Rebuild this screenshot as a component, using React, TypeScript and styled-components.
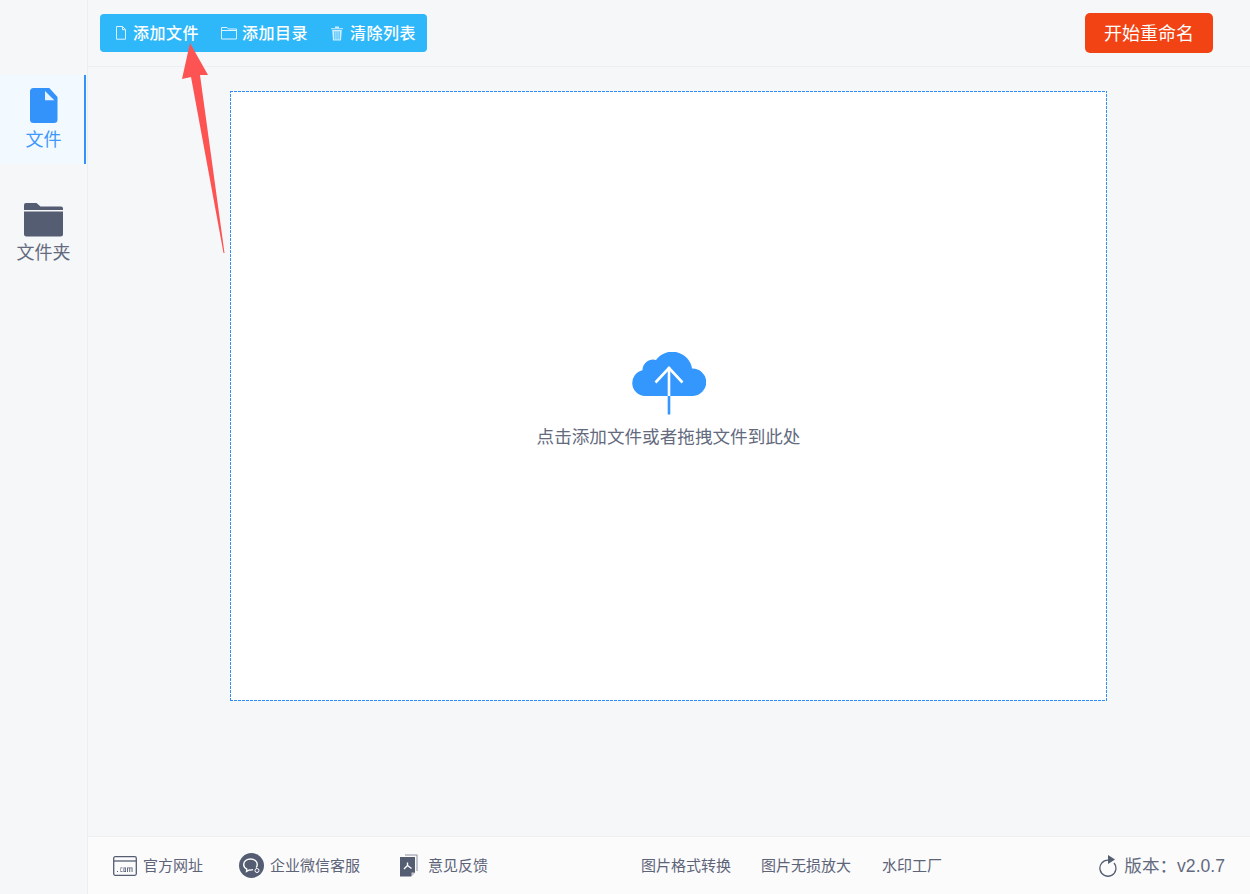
import styled, { createGlobalStyle } from "styled-components";

const GlobalStyle = createGlobalStyle`
  html, body {
    margin: 0;
    padding: 0;
    background: #f6f7f9;
  }
  * {
    box-sizing: border-box;
  }
`;

const FONT = `"Liberation Sans", "Noto Sans CJK SC", sans-serif`;
const DASH = "#2e8ffb";

const Shell = styled.div`
  position: relative;
  display: flex;
  width: 1250px;
  height: 894px;
  overflow: hidden;
  background: #f6f7f9;
  font-family: ${FONT};
`;

const Sidebar = styled.aside`
  flex: 0 0 88px;
  padding-top: 75px;
  border-right: 1px solid #eceef1;
`;

const NavItem = styled.div<{ $active?: boolean }>`
  display: flex;
  flex-direction: column;
  align-items: center;
  width: 86px;
  height: ${(p) => (p.$active ? "89px" : "113px")};
  padding-top: ${(p) => (p.$active ? "13px" : "39px")};
  padding-left: 3px;
  color: ${(p) => (p.$active ? "#3f98fb" : "#636a7e")};
  background: ${(p) => (p.$active ? "#f3faff" : "transparent")};
  border-right: 2px solid ${(p) => (p.$active ? "#3492fb" : "transparent")};
  font-size: 18px;
  line-height: 26px;

  svg {
    display: block;
  }
`;

const NavLabel = styled.span<{ $gap: number }>`
  margin-top: ${(p) => p.$gap}px;
`;

const Content = styled.div`
  flex: 1;
  display: flex;
  flex-direction: column;
  min-width: 0;
`;

const TopBar = styled.header`
  flex: 0 0 67px;
  display: flex;
  align-items: flex-start;
  justify-content: space-between;
  padding: 13px 37px 0 12px;
  border-bottom: 1px solid #eceef1;
`;

const Toolbar = styled.div`
  display: flex;
  align-items: center;
  height: 38px;
  margin-top: 1px;
  padding: 0 11px 2px 15px;
  background: #2fb8f9;
  border-radius: 4px;
  color: #fff;
  font-size: 16px;
  font-weight: 500;
`;

const ToolButton = styled.div<{ $gap: number; $iconGap: number }>`
  display: flex;
  align-items: center;
  margin-left: ${(p) => p.$gap}px;
  white-space: nowrap;
  letter-spacing: 0.5px;

  svg {
    display: block;
    margin-top: 2px;
    margin-right: ${(p) => p.$iconGap}px;
  }
`;

const StartButton = styled.div`
  display: flex;
  align-items: center;
  justify-content: center;
  width: 128px;
  height: 40px;
  padding-bottom: 2px;
  background: #f24314;
  border-radius: 5px;
  color: #fff;
  font-size: 18px;
`;

const Workspace = styled.main`
  flex: 1;
  display: flex;
  justify-content: center;
  align-items: flex-start;
  padding: 24px 1px 0 0;
`;

const DropZone = styled.div`
  display: flex;
  flex-direction: column;
  align-items: center;
  width: 877px;
  height: 610px;
  padding-top: 261px;
  background-color: #fff;
  background-image:
    repeating-linear-gradient(90deg, ${DASH} 0 3px, transparent 3px 4px),
    repeating-linear-gradient(90deg, ${DASH} 0 3px, transparent 3px 4px),
    repeating-linear-gradient(0deg, ${DASH} 0 3px, transparent 3px 4px),
    repeating-linear-gradient(0deg, ${DASH} 0 3px, transparent 3px 4px);
  background-size: 100% 1px, 100% 1px, 1px 100%, 1px 100%;
  background-position: 0 0, 0 100%, 0 0, 100% 0;
  background-repeat: no-repeat;
  color: #636a7e;
  font-size: 17.6px;
  line-height: 26px;
`;

const DropHint = styled.span`
  margin-top: 9px;
`;

const Footer = styled.footer`
  flex: 0 0 58px;
  display: flex;
  align-items: center;
  padding: 0 25px 2px;
  background: #fbfbfc;
  border-top: 1px solid #eff0f2;
  color: #5d6478;
  font-size: 15px;
`;

const FooterGroup = styled.div`
  flex: 0 0 528px;
  display: flex;
  align-items: center;
`;

const FooterLink = styled.div<{ $gap?: number; $iconGap: number }>`
  display: flex;
  align-items: center;
  margin-left: ${(p) => p.$gap ?? 0}px;
  white-space: nowrap;

  svg {
    display: block;
    margin-top: 2px;
    margin-right: ${(p) => p.$iconGap}px;
  }
`;

const ToolLinks = styled.div`
  display: flex;
  gap: 30px;
`;

const ToolLink = styled.span<{ $gap?: number }>`
  margin-left: ${(p) => p.$gap ?? 0}px;
`;

const Version = styled.div`
  display: flex;
  align-items: center;
  margin-left: auto;
  font-size: 17.6px;
  color: #636a7e;

  svg {
    display: block;
    margin-right: 7px;
  }
`;

const ArrowOverlay = styled.svg`
  position: absolute;
  left: 0;
  top: 0;
  pointer-events: none;
`;

const FileNavIcon = () => (
  <svg width="28" height="36" viewBox="0 0 28 36">
    <path
      d="M3.500 0H19.300L27.500 9V31.500a3.500 3.500 0 0 1-3.500 3.500H3.500A3.500 3.500 0 0 1 0 31.500V3.500A3.500 3.500 0 0 1 3.500 0Z"
      fill="#3492fb"
    />
    <path d="M15 3 24.300 12.300H15Z" fill="#e9f3ff" />
  </svg>
);

const FolderNavIcon = () => (
  <svg width="39" height="34" viewBox="0 0 39 34">
    <path
      d="M2 0H12.500L16.500 3.500H37a2 2 0 0 1 2 2V7H0V2a2 2 0 0 1 2-2Z"
      fill="#555d72"
    />
    <path
      d="M0 8.500H39V31a2.500 2.500 0 0 1-2.500 2.500H2.500A2.500 2.500 0 0 1 0 31Z"
      fill="#555d72"
    />
  </svg>
);

const ToolFileIcon = () => (
  <svg width="12" height="14" viewBox="0 0 12 14" fill="none" stroke="#dff3ff" strokeWidth="1">
    <path d="M1.500.5H7.500L10.500 3.700V13.200H1.500Z" />
    <path d="M7.500.5V3.700H10.500" />
  </svg>
);

const ToolFolderIcon = () => (
  <svg width="16" height="14" viewBox="0 0 16 14" fill="none" stroke="#dff3ff" strokeWidth="1">
    <path d="M.5 1.500H6L7.500 3H15.500V13H.5Z" />
    <path d="M.5 4.500H15.500" />
  </svg>
);

const ToolTrashIcon = () => (
  <svg width="12" height="15" viewBox="0 0 12 15" fill="#cfeeff">
    <path d="M0 2.200H12V3.300H0ZM4 .5H8V2H4Z" />
    <path
      d="M1.200 4H10.800L10 14.500H2ZM3.400 5.200V13.400H4.400V5.200ZM5.500 5.200V13.400H6.500V5.200ZM7.600 5.200V13.400H8.600V5.200Z"
      fillRule="evenodd"
    />
  </svg>
);

const CloudIcon = () => (
  <svg width="74" height="63" viewBox="0 0 74 63">
    <path
      d="M13 44A13 13 0 0 1 10.500 18.300 10.500 10.500 0 0 1 24 8 20 20 0 0 1 60 16.500 13.500 13.500 0 0 1 61 44Z"
      fill="#3397fd"
    />
    <path d="M37 15V44" stroke="#fff" strokeWidth="2.600" fill="none" />
    <path d="M37 44V62.500" stroke="#3397fd" strokeWidth="2.600" fill="none" />
    <path d="M23.500 30.500 37 16 50.500 30.500" stroke="#fff" strokeWidth="2.600" fill="none" />
  </svg>
);

const ComIcon = () => (
  <svg width="24" height="20" viewBox="0 0 24 20" fill="none">
    <rect x="0.700" y="0.700" width="22.600" height="18.600" rx="1.500" stroke="#555d72" strokeWidth="1.300" />
    <path d="M1 5H23" stroke="#555d72" strokeWidth="1.300" />
    <path
      d="M4 15h1v1H4ZM7.500 11.500h2v.8H8v2.900h1.500v.8h-2ZM10.500 11.500h2.500v4.500h-2.500ZM11.300 12.300v2.900h.9v-2.900ZM14 11.500h5.500v4.500h-.9v-3.700h-1.400v3.700h-.9v-3.700h-1.400v3.700H14Z"
      fill="#555d72"
    />
  </svg>
);

const ChatIcon = () => (
  <svg width="25" height="25" viewBox="0 0 25 25">
    <circle cx="12.500" cy="12.500" r="12.500" fill="#555d72" />
    <path
      d="M17.200 14.500C18 13.500 18.300 12.500 18.300 11.500 18.300 8.300 15.300 6 11.500 6S4.700 8.300 4.700 11.500C4.700 13.600 6 15.300 7.800 16.200L7.500 18.500 10.300 17C11.500 17.200 12.800 17.100 14 16.700"
      fill="none"
      stroke="#fff"
      strokeWidth="1.400"
    />
    <circle cx="18" cy="17.500" r="2" fill="none" stroke="#fff" strokeWidth="1" />
  </svg>
);

const FeedbackIcon = () => (
  <svg width="18" height="23" viewBox="0 0 18 23">
    <path d="M5 0.500H17.500V17H16.500V1.500H5Z" fill="#8a90a0" />
    <path d="M0 3H15V18.500L11 22.500H0Z" fill="#555d72" />
    <path d="M11.500 22 15 18.500H11.500Z" fill="#c9ccd4" />
    <path d="M7.500 8.500V11.500L4 15M7.500 11.500 11.500 14.500" stroke="#fff" strokeWidth="1.400" fill="none" />
  </svg>
);

const RefreshIcon = () => (
  <svg width="19" height="24" viewBox="0 0 19 24" fill="none">
    <path d="M10 7.200A8 8 0 1 0 16 10" stroke="#555d72" strokeWidth="1.300" />
    <path d="M10 2 17 6.500 10 11Z" fill="#555d72" />
  </svg>
);

const App = () => {
  return (
    <Shell>
      <GlobalStyle />
      <Sidebar>
        <NavItem $active>
          <FileNavIcon />
          <NavLabel $gap={3}>文件</NavLabel>
        </NavItem>
        <NavItem>
          <FolderNavIcon />
          <NavLabel $gap={3}>文件夹</NavLabel>
        </NavItem>
      </Sidebar>
      <Content>
        <TopBar>
          <Toolbar>
            <ToolButton $gap={0} $iconGap={6}>
              <ToolFileIcon />
              添加文件
            </ToolButton>
            <ToolButton $gap={22} $iconGap={5}>
              <ToolFolderIcon />
              添加目录
            </ToolButton>
            <ToolButton $gap={23} $iconGap={7}>
              <ToolTrashIcon />
              清除列表
            </ToolButton>
          </Toolbar>
          <StartButton>开始重命名</StartButton>
        </TopBar>
        <Workspace>
          <DropZone>
            <CloudIcon />
            <DropHint>点击添加文件或者拖拽文件到此处</DropHint>
          </DropZone>
        </Workspace>
        <Footer>
          <FooterGroup>
            <FooterLink $iconGap={6}>
              <ComIcon />
              官方网址
            </FooterLink>
            <FooterLink $gap={36} $iconGap={6}>
              <ChatIcon />
              企业微信客服
            </FooterLink>
            <FooterLink $gap={40} $iconGap={10}>
              <FeedbackIcon />
              意见反馈
            </FooterLink>
          </FooterGroup>
          <ToolLinks>
            <ToolLink>图片格式转换</ToolLink>
            <ToolLink>图片无损放大</ToolLink>
            <ToolLink $gap={1}>水印工厂</ToolLink>
          </ToolLinks>
          <Version>
            <RefreshIcon />
            {"版本\uFF1Av2.0.7"}
          </Version>
        </Footer>
      </Content>
      <ArrowOverlay width="1250" height="894" viewBox="0 0 1250 894">
        <path d="M190 43 208 75 200 75 224.500 253 223.500 253 191 77 182 79Z" fill="#fd5353" />
      </ArrowOverlay>
    </Shell>
  );
};

export default App;
